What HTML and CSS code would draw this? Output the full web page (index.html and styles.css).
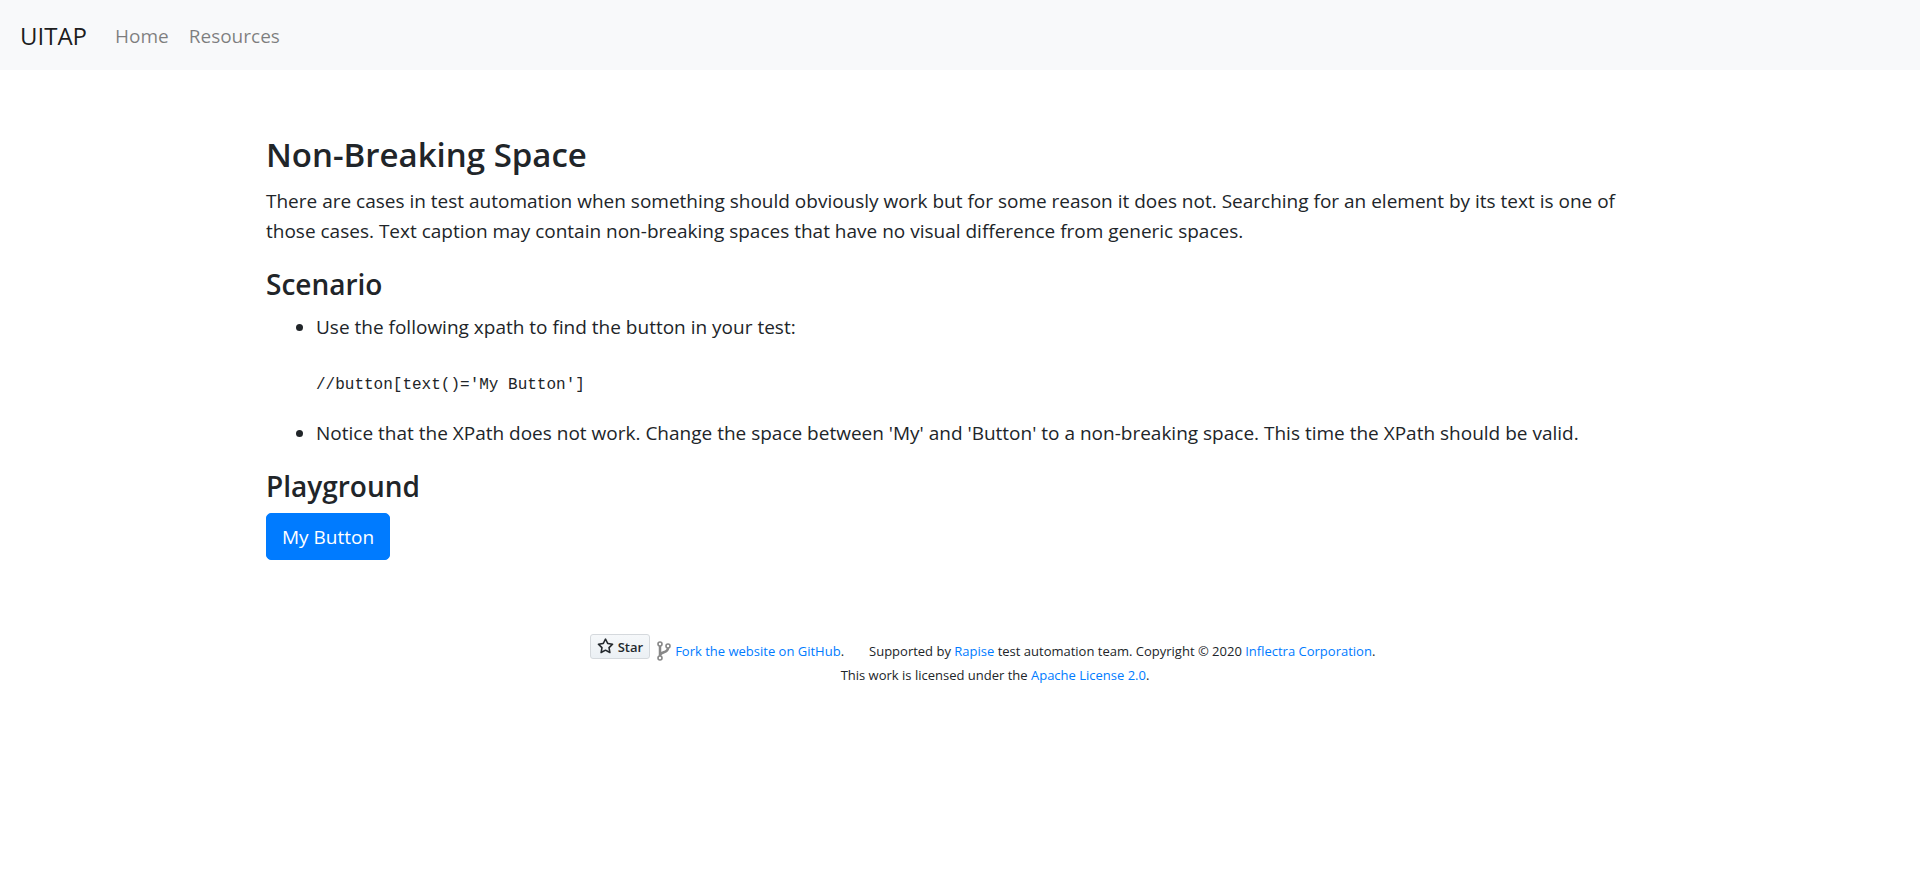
FILE: index.html
```
<!DOCTYPE html>
<html lang="en">
<head>
<meta charset="utf-8">
<meta name="viewport" content="width=device-width, initial-scale=1">
<title>Non-Breaking Space</title>
<link rel="stylesheet" href="styles.css">
</head>
<body>
<nav class="navbar">
  <a class="brand" href="#">UITAP</a>
  <a class="nav-link" href="#">Home</a>
  <a class="nav-link" href="#">Resources</a>
</nav>
<main class="container">
  <h3 class="title">Non-Breaking Space</h3>
  <p class="intro">There are cases in test automation when something should obviously work but for some reason it does not. Searching for an element by its text is one of those cases. Text caption may contain non-breaking spaces that have no visual difference from generic spaces.</p>
  <h4 class="subtitle">Scenario</h4>
  <ul class="steps">
    <li>Use the following xpath to find the button in your test:
      <pre class="code">//button[text()='My Button']</pre>
    </li>
    <li>Notice that the XPath does not work. Change the space between 'My' and 'Button' to a non-breaking space. This time the XPath should be valid.</li>
  </ul>
  <h4 class="subtitle">Playground</h4>
  <button class="btn" type="button">My&nbsp;Button</button>
</main>
<footer class="footer">
  <div class="footer-row">
    <a class="star" href="#"><svg class="star-icon" viewBox="0 0 16 16" aria-hidden="true"><path fill-rule="evenodd" d="M8 .25a.75.75 0 01.673.418l1.882 3.815 4.21.612a.75.75 0 01.416 1.279l-3.046 2.97.719 4.192a.75.75 0 01-1.088.791L8 12.347l-3.766 1.98a.75.75 0 01-1.088-.79l.72-4.194L.818 6.374a.75.75 0 01.416-1.28l4.21-.611L7.327.668A.75.75 0 018 .25zm0 2.445L6.615 5.5a.75.75 0 01-.564.41l-3.097.45 2.24 2.184a.75.75 0 01.216.664l-.528 3.084 2.769-1.456a.75.75 0 01.698 0l2.77 1.456-.53-3.084a.75.75 0 01.216-.664l2.24-2.183-3.096-.45a.75.75 0 01-.564-.41L8 2.694z"/></svg>Star</a>
    <svg class="fork-icon" viewBox="0 0 14 20" aria-hidden="true"><g fill="none" stroke="currentColor"><circle cx="3" cy="3" r="2" stroke-width="1.6"/><circle cx="3" cy="17" r="2" stroke-width="1.6"/><circle cx="11" cy="5" r="2" stroke-width="1.6"/><path stroke-width="2.5" d="M3 5v10M11 7c0 5.500-7.500 3-8 7.500"/></g></svg>
    <span><a class="link" href="#">Fork the website on GitHub</a>.</span>
    <span class="support">Supported by <a class="link" href="#">Rapise</a> test automation team. Copyright © 2020 <a class="link" href="#">Inflectra Corporation</a>.</span>
  </div>
  <div class="license">This work is licensed under the <a class="link" href="#">Apache License 2.0</a>.</div>
</footer>
</body>
</html>
```
FILE: styles.css
```
* { box-sizing: border-box; }
body {
  margin: 0;
  font: 19px/30px "Open Sans", sans-serif;
  color: #212529;
  background: #fff;
}
.navbar {
  display: flex;
  align-items: center;
  gap: 20px;
  min-height: 70px;
  padding: 11px 20px 10px;
  background: #f8f9fa;
}
.brand {
  margin-right: 8px;
  font-size: 24px;
  color: rgba(0, 0, 0, .9);
  text-decoration: none;
}
.nav-link { color: rgba(0, 0, 0, .5); text-decoration: none; }
.container {
  max-width: 1426px;
  margin: 0 auto;
  padding: 64px 19px 0;
}
.title, .subtitle { margin: 0 0 10px; font-weight: 600; }
.title { font-size: 33px; line-height: 42px; }
.subtitle { font-size: 28px; line-height: 36px; }
.subtitle + .btn { margin-top: -1px; }
.intro { margin: 0 0 20px; }
.steps { margin: 0 0 20px; padding-left: 50px; }
.code {
  margin: 30px 0 20px;
  font: 16px/26px "Liberation Mono", monospace;
}
.btn {
  display: block;
  padding: 8px 15px 7px;
  border: 1px solid #007bff;
  border-radius: 5px;
  background: #007bff;
  color: #fff;
  font: inherit;
}
.footer {
  display: flex;
  flex-direction: column;
  align-items: center;
  padding: 74px 0 20px 45px;
  font-size: 13px;
  line-height: 24px;
}
.footer-row { display: flex; align-items: flex-end; }
.star {
  display: flex;
  align-items: center;
  gap: 4px;
  height: 25px;
  margin: 0 7px 4px 0;
  padding: 0 6px;
  border: 1px solid #d5d9dd;
  border-radius: 3px;
  background: linear-gradient(#f6f8fa, #ebf0f4);
  color: #24292e;
  font-weight: 600;
  text-decoration: none;
}
.star-icon { width: 17px; height: 17px; fill: currentColor; }
.fork-icon { width: 14px; height: 20px; margin: 0 4px 2px 0; color: #888; }
.link { color: #007bff; text-decoration: none; }
.support { margin-left: 25px; }
.license { padding-left: 25px; }
```
